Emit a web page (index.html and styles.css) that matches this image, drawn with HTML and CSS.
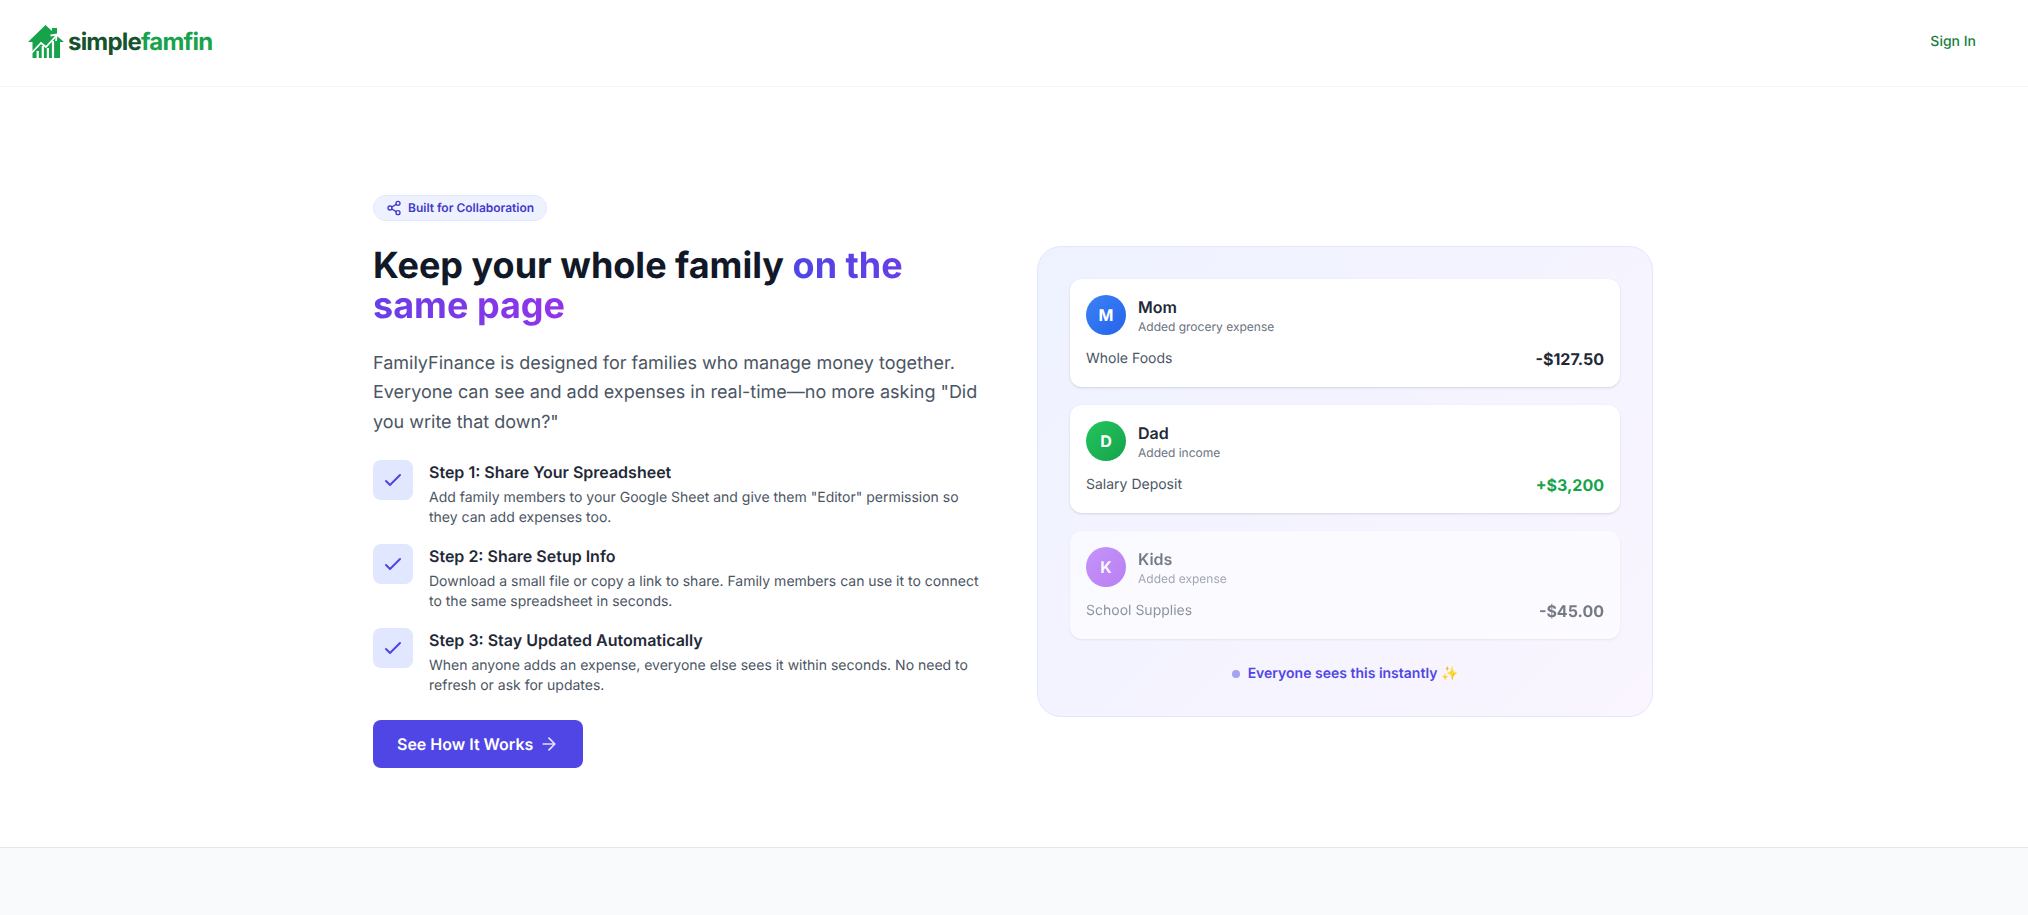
FILE: index.html
```html
<!DOCTYPE html>
<html lang="en">
<head>
    <meta charset="UTF-8">
    <meta name="viewport" content="width=device-width, initial-scale=1.0">
    <title>simplefamfin</title>
    <link rel="stylesheet" href="styles.css">
</head>
<body>
    <!-- Header -->
    <header class="header">
        <a class="logo" href="#">
            <svg class="logo-icon" viewBox="0 0 36 33" width="36" height="33">
                <path class="logo-house" d="M0 17 L17.5 0 L24 6 V3 H29 V11 L36 17 H32 V33 H4.5 V17 Z"/>
                <path class="logo-gaps" d="M9.7 33 V26 M14.8 33 V21 M19.9 33 V23 M25 33 V16"/>
                <path class="logo-line" d="M3.5 28 L13 18 L18 22 L28 11"/>
                <path class="logo-line" d="M22.5 10.5 L28.7 9.5 L28 16"/>
            </svg>
            <span class="logo-text">simple<span class="logo-accent">famfin</span></span>
        </a>
        <a class="sign-in" href="#">Sign In</a>
    </header>

    <!-- Hero -->
    <main class="hero">
        <div class="hero-inner">
            <section class="intro">
                <div class="badge">
                    <svg class="badge-icon" viewBox="0 0 24 24" width="16" height="16">
                        <circle cx="18" cy="5" r="3"/>
                        <circle cx="6" cy="12" r="3"/>
                        <circle cx="18" cy="19" r="3"/>
                        <path d="M8.59 13.51l6.83 3.98M15.41 6.51l-6.82 3.98"/>
                    </svg>
                    Built for Collaboration
                </div>
                <h1>Keep your whole family <span class="gradient-text">on the same page</span></h1>
                <p class="lead">FamilyFinance is designed for families who manage money together. Everyone can see and add expenses in real-time—no more asking "Did you write that down?"</p>

                <div class="steps">
                    <div class="step">
                        <div class="step-check">
                            <svg viewBox="0 0 24 24" width="24" height="24"><path d="M5 13l4 4L19 7"/></svg>
                        </div>
                        <div>
                            <h3>Step 1: Share Your Spreadsheet</h3>
                            <p>Add family members to your Google Sheet and give them "Editor" permission so they can add expenses too.</p>
                        </div>
                    </div>
                    <div class="step">
                        <div class="step-check">
                            <svg viewBox="0 0 24 24" width="24" height="24"><path d="M5 13l4 4L19 7"/></svg>
                        </div>
                        <div>
                            <h3>Step 2: Share Setup Info</h3>
                            <p>Download a small file or copy a link to share. Family members can use it to connect to the same spreadsheet in seconds.</p>
                        </div>
                    </div>
                    <div class="step">
                        <div class="step-check">
                            <svg viewBox="0 0 24 24" width="24" height="24"><path d="M5 13l4 4L19 7"/></svg>
                        </div>
                        <div>
                            <h3>Step 3: Stay Updated Automatically</h3>
                            <p>When anyone adds an expense, everyone else sees it within seconds. No need to refresh or ask for updates.</p>
                        </div>
                    </div>
                </div>

                <a class="cta" href="#">
                    See How It Works
                    <svg viewBox="0 0 24 24" width="20" height="20"><path d="M5 12h14M12 5l7 7-7 7"/></svg>
                </a>
            </section>

            <!-- Activity demo -->
            <section class="activity">
                <div class="activity-card">
                    <div class="activity-head">
                        <div class="avatar avatar-blue">M</div>
                        <div>
                            <div class="person">Mom</div>
                            <div class="action">Added grocery expense</div>
                        </div>
                    </div>
                    <div class="activity-row">
                        <span class="item">Whole Foods</span>
                        <span class="amount">-$127.50</span>
                    </div>
                </div>
                <div class="activity-card">
                    <div class="activity-head">
                        <div class="avatar avatar-green">D</div>
                        <div>
                            <div class="person">Dad</div>
                            <div class="action">Added income</div>
                        </div>
                    </div>
                    <div class="activity-row">
                        <span class="item">Salary Deposit</span>
                        <span class="amount amount-plus">+$3,200</span>
                    </div>
                </div>
                <div class="activity-card faded">
                    <div class="activity-head">
                        <div class="avatar avatar-purple">K</div>
                        <div>
                            <div class="person">Kids</div>
                            <div class="action">Added expense</div>
                        </div>
                    </div>
                    <div class="activity-row">
                        <span class="item">School Supplies</span>
                        <span class="amount">-$45.00</span>
                    </div>
                </div>
                <div class="activity-note"><span class="dot"></span>Everyone sees this instantly ✨</div>
            </section>
        </div>
    </main>

    <div class="next-section"></div>
</body>
</html>
```

FILE: styles.css
```css
* {
    margin: 0;
    padding: 0;
    box-sizing: border-box;
}

body {
    display: flex;
    flex-direction: column;
    min-height: 100vh;
    background: #fff;
    color: #111827;
    font-family: Inter, "Noto Sans", sans-serif;
    text-rendering: geometricPrecision;
}

a {
    text-decoration: none;
}

/* Header */
.header {
    display: flex;
    justify-content: space-between;
    align-items: center;
    height: 87px;
    padding: 0 52px 3px 28px;
    border-bottom: 1px solid #f3f4f6;
}

.logo {
    display: flex;
    align-items: center;
    gap: 4px;
}

.logo-house {
    fill: #16a34a;
}

.logo-gaps {
    fill: none;
    stroke: #fff;
    stroke-width: 2.2;
}

.logo-line {
    fill: none;
    stroke: #fff;
    stroke-width: 1.8;
}

.logo-text {
    font-size: 24px;
    font-weight: 700;
    letter-spacing: -0.8px;
    color: #14532d;
}

.logo-accent {
    color: #16a34a;
}

.sign-in {
    font-size: 14px;
    font-weight: 500;
    color: #15803d;
}

/* Hero */
.hero {
    padding: 108px 2px 79px 0;
    border-bottom: 1px solid #e5e7eb;
}

.hero-inner {
    display: grid;
    grid-template-columns: 1fr 1fr;
    gap: 48px;
    align-items: center;
    width: 1280px;
    margin: 0 auto;
}

.badge {
    display: inline-flex;
    align-items: center;
    gap: 6px;
    height: 26px;
    padding: 0 12px;
    background: #eef2ff;
    border: 1px solid #e0e7ff;
    border-radius: 13px;
    font-size: 12px;
    line-height: 16px;
    font-weight: 600;
    color: #4338ca;
}

.badge-icon {
    fill: none;
    stroke: #4338ca;
    stroke-width: 2;
    stroke-linecap: round;
    stroke-linejoin: round;
}

h1 {
    margin-top: 24px;
    font-size: 36px;
    line-height: 40px;
    font-weight: 700;
    color: #111827;
}

.gradient-text {
    background: linear-gradient(90deg, #4f46e5, #9333ea);
    -webkit-background-clip: text;
    background-clip: text;
    color: transparent;
}

.lead {
    margin-top: 24px;
    font-size: 18px;
    line-height: 29.25px;
    color: #4b5563;
}

.steps {
    display: flex;
    flex-direction: column;
    gap: 16px;
    margin-top: 23.25px;
}

.step {
    display: flex;
    gap: 16px;
}

.step-check {
    display: flex;
    align-items: center;
    justify-content: center;
    flex-shrink: 0;
    width: 40px;
    height: 40px;
    background: #e0e7ff;
    border-radius: 8px;
}

.step-check svg {
    fill: none;
    stroke: #4f46e5;
    stroke-width: 2;
    stroke-linecap: round;
    stroke-linejoin: round;
}

.step h3 {
    margin-bottom: 4px;
    font-size: 16px;
    line-height: 24px;
    font-weight: 600;
    color: #1f2937;
}

.step p {
    font-size: 14px;
    line-height: 20px;
    color: #4b5563;
}

.cta {
    display: inline-flex;
    align-items: center;
    gap: 6px;
    height: 48px;
    margin-top: 24px;
    padding: 0 24px;
    background: #4f46e5;
    border-radius: 8px;
    font-size: 16px;
    font-weight: 600;
    color: #fff;
}

.cta svg {
    fill: none;
    stroke: #fff;
    stroke-width: 2;
    stroke-linecap: round;
    stroke-linejoin: round;
    opacity: 0.85;
}

/* Activity demo */
.activity {
    display: flex;
    flex-direction: column;
    gap: 18px;
    padding: 32px;
    background: linear-gradient(135deg, #eef2ff, #faf5ff);
    border: 1px solid #e0e7ff;
    border-radius: 24px;
}

.activity-card {
    padding: 16px;
    background: #fff;
    border-radius: 12px;
    box-shadow: 0 1px 3px rgba(0, 0, 0, 0.1), 0 1px 2px -1px rgba(0, 0, 0, 0.1);
}

.activity-card.faded {
    opacity: 0.6;
}

.activity-head {
    display: flex;
    align-items: center;
    gap: 12px;
    margin-bottom: 12px;
}

.avatar {
    display: flex;
    align-items: center;
    justify-content: center;
    width: 40px;
    height: 40px;
    border-radius: 50%;
    font-weight: 700;
    color: #fff;
}

.avatar-blue {
    background: linear-gradient(135deg, #3b82f6, #2563eb);
}

.avatar-green {
    background: linear-gradient(135deg, #22c55e, #16a34a);
}

.avatar-purple {
    background: linear-gradient(135deg, #a855f7, #9333ea);
}

.person {
    font-size: 16px;
    line-height: 24px;
    font-weight: 600;
    color: #1f2937;
}

.action {
    font-size: 12px;
    line-height: 16px;
    color: #6b7280;
}

.activity-row {
    display: flex;
    justify-content: space-between;
    align-items: center;
}

.item {
    font-size: 14px;
    line-height: 20px;
    color: #4b5563;
}

.amount {
    font-size: 16px;
    line-height: 24px;
    font-weight: 700;
    color: #1f2937;
}

.amount-plus {
    color: #16a34a;
}

.activity-note {
    display: flex;
    align-items: center;
    justify-content: center;
    gap: 8px;
    margin-top: 7px;
    font-size: 14px;
    line-height: 20px;
    font-weight: 600;
    color: #4f46e5;
}

.dot {
    width: 8px;
    height: 8px;
    border-radius: 50%;
    background: #a5a3f0;
}

.next-section {
    flex: 1;
    background: #f9fafb;
}
```
